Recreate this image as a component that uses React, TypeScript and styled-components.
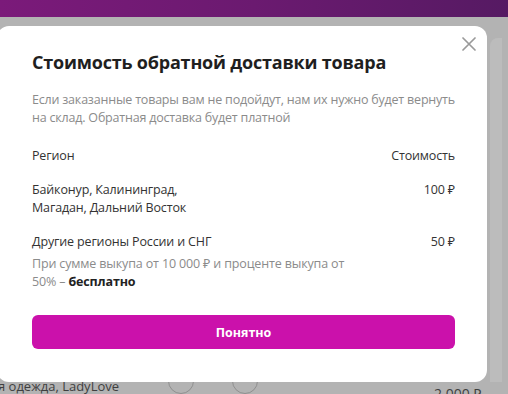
import React from 'react';
import styled, { createGlobalStyle } from 'styled-components';

const GlobalStyle = createGlobalStyle`
  html, body {
    margin: 0;
    padding: 0;
    width: 508px;
    height: 394px;
    overflow: hidden;
    font-family: 'Open Sans', 'Noto Sans', Arial, sans-serif;
  }
  * {
    box-sizing: border-box;
  }
`;

type Row = {
  region: string[];
  price: string;
  note?: boolean;
};

const rows: Row[] = [
  { region: ['Байконур, Калининград,', 'Магадан, Дальний Восток'], price: '100 ₽' },
  { region: ['Другие регионы России и СНГ'], price: '50 ₽', note: true },
];

const App = () => {
  return (
    <Page>
      <GlobalStyle />
      <Header />
      <Backdrop>
        <Stage>
          <Modal>
            <CloseButton aria-label="Закрыть">
              <svg width="14" height="14" viewBox="0 0 14 14">
                <path d="M1 1L13 13M13 1L1 13" stroke="#9a9a9a" strokeWidth="1.7" strokeLinecap="round" />
              </svg>
            </CloseButton>
            <Title>Стоимость обратной доставки товара</Title>
            <Description>
              Если заказанные товары вам не подойдут, нам их нужно будет вернуть на склад.
              Обратная доставка будет платной
            </Description>
            <TableHead>
              <span>Регион</span>
              <span>Стоимость</span>
            </TableHead>
            {rows.map(row => (
              <TableRow key={row.price}>
                <RowLine>
                  <Region>
                    {row.region.map(line => (
                      <div key={line}>{line}</div>
                    ))}
                  </Region>
                  <Price>{row.price}</Price>
                </RowLine>
                {row.note && (
                  <Note>
                    При сумме выкупа от 10 000 ₽ и проценте выкупа от 50% – <b>бесплатно</b>
                  </Note>
                )}
              </TableRow>
            ))}
            <OkButton>Понятно</OkButton>
          </Modal>
          <SideCard />
        </Stage>
        <BehindRow>
          <BehindTitle>я одежда, LadyLove</BehindTitle>
          <Circle />
          <Circle />
          <BehindPrice>2 000 ₽</BehindPrice>
        </BehindRow>
      </Backdrop>
    </Page>
  );
};

const Page = styled.div`
  width: 508px;
  height: 394px;
  display: flex;
  flex-direction: column;
  background: #b4b4b4;
  overflow: hidden;
`;

const Header = styled.div`
  height: 17px;
  flex-shrink: 0;
  background: linear-gradient(90deg, #7b1a7a 0%, #6b1a70 50%, #561a63 100%);
`;

const Backdrop = styled.div`
  flex: 1;
  display: flex;
  flex-direction: column;
  background: #b3b3b3;
  padding-top: 9px;
`;

const Stage = styled.div`
  display: flex;
  align-items: flex-start;
  gap: 3px;
`;

const Modal = styled.div`
  position: relative;
  z-index: 2;
  flex-shrink: 0;
  width: 490px;
  height: 356px;
  margin-left: -3px;
  padding: 22px 32px 0 35px;
  background: #fff;
  border-radius: 12px;
  display: flex;
  flex-direction: column;
  letter-spacing: -0.15px;
`;

const SideCard = styled.div`
  width: 12px;
  height: 344px;
  margin-top: 12px;
  background: #bcbcbc;
  border-radius: 8px 0 0 0;
`;

const CloseButton = styled.button`
  position: absolute;
  top: 8px;
  right: 8px;
  width: 20px;
  height: 20px;
  padding: 0;
  border: none;
  background: none;
  display: flex;
  align-items: center;
  justify-content: center;
`;

const Title = styled.h2`
  margin: 0;
  font-size: 18px;
  line-height: 28px;
  font-weight: 700;
  letter-spacing: -0.2px;
  color: #1f1f1f;
`;

const Description = styled.p`
  margin: 15px 0 0 0;
  font-size: 12.5px;
  line-height: 18px;
  letter-spacing: -0.2px;
  color: #8b8b8b;
`;

const TableHead = styled.div`
  margin-top: 20px;
  display: flex;
  justify-content: space-between;
  font-size: 12.5px;
  line-height: 18px;
  color: #333;
`;

const TableRow = styled.div`
  margin-top: 16px;
  display: flex;
  flex-direction: column;
`;

const RowLine = styled.div`
  display: flex;
  justify-content: space-between;
  font-size: 12.5px;
  line-height: 18px;
  color: #333;
`;

const Region = styled.div``;

const Price = styled.span`
  white-space: nowrap;
`;

const Note = styled.div`
  margin-top: 4px;
  width: 325px;
  font-size: 12.5px;
  line-height: 18px;
  color: #8b8b8b;

  b {
    color: #222;
    font-weight: 700;
  }
`;

const OkButton = styled.button`
  margin-top: 24px;
  height: 34px;
  width: 100%;
  border: none;
  border-radius: 6px;
  background: #cb11ab;
  color: #fff;
  font-family: inherit;
  font-size: 12.5px;
  font-weight: 700;
`;

const BehindRow = styled.div`
  display: flex;
  align-items: flex-start;
  margin-top: -16px;
  position: relative;
  z-index: 1;
  color: #3f3f3f;
  font-size: 13px;
`;

const BehindTitle = styled.span`
  margin-top: 11px;
  margin-left: -2px;
  width: 170px;
  line-height: 18px;
`;

const Circle = styled.span`
  width: 26px;
  height: 26px;
  margin-top: 2px;
  margin-right: 38px;
  border: 1px solid #8f8f8f;
  border-radius: 50%;
`;

const BehindPrice = styled.span`
  margin-top: 18px;
  margin-left: 138px;
  font-size: 14px;
`;

export default App;
